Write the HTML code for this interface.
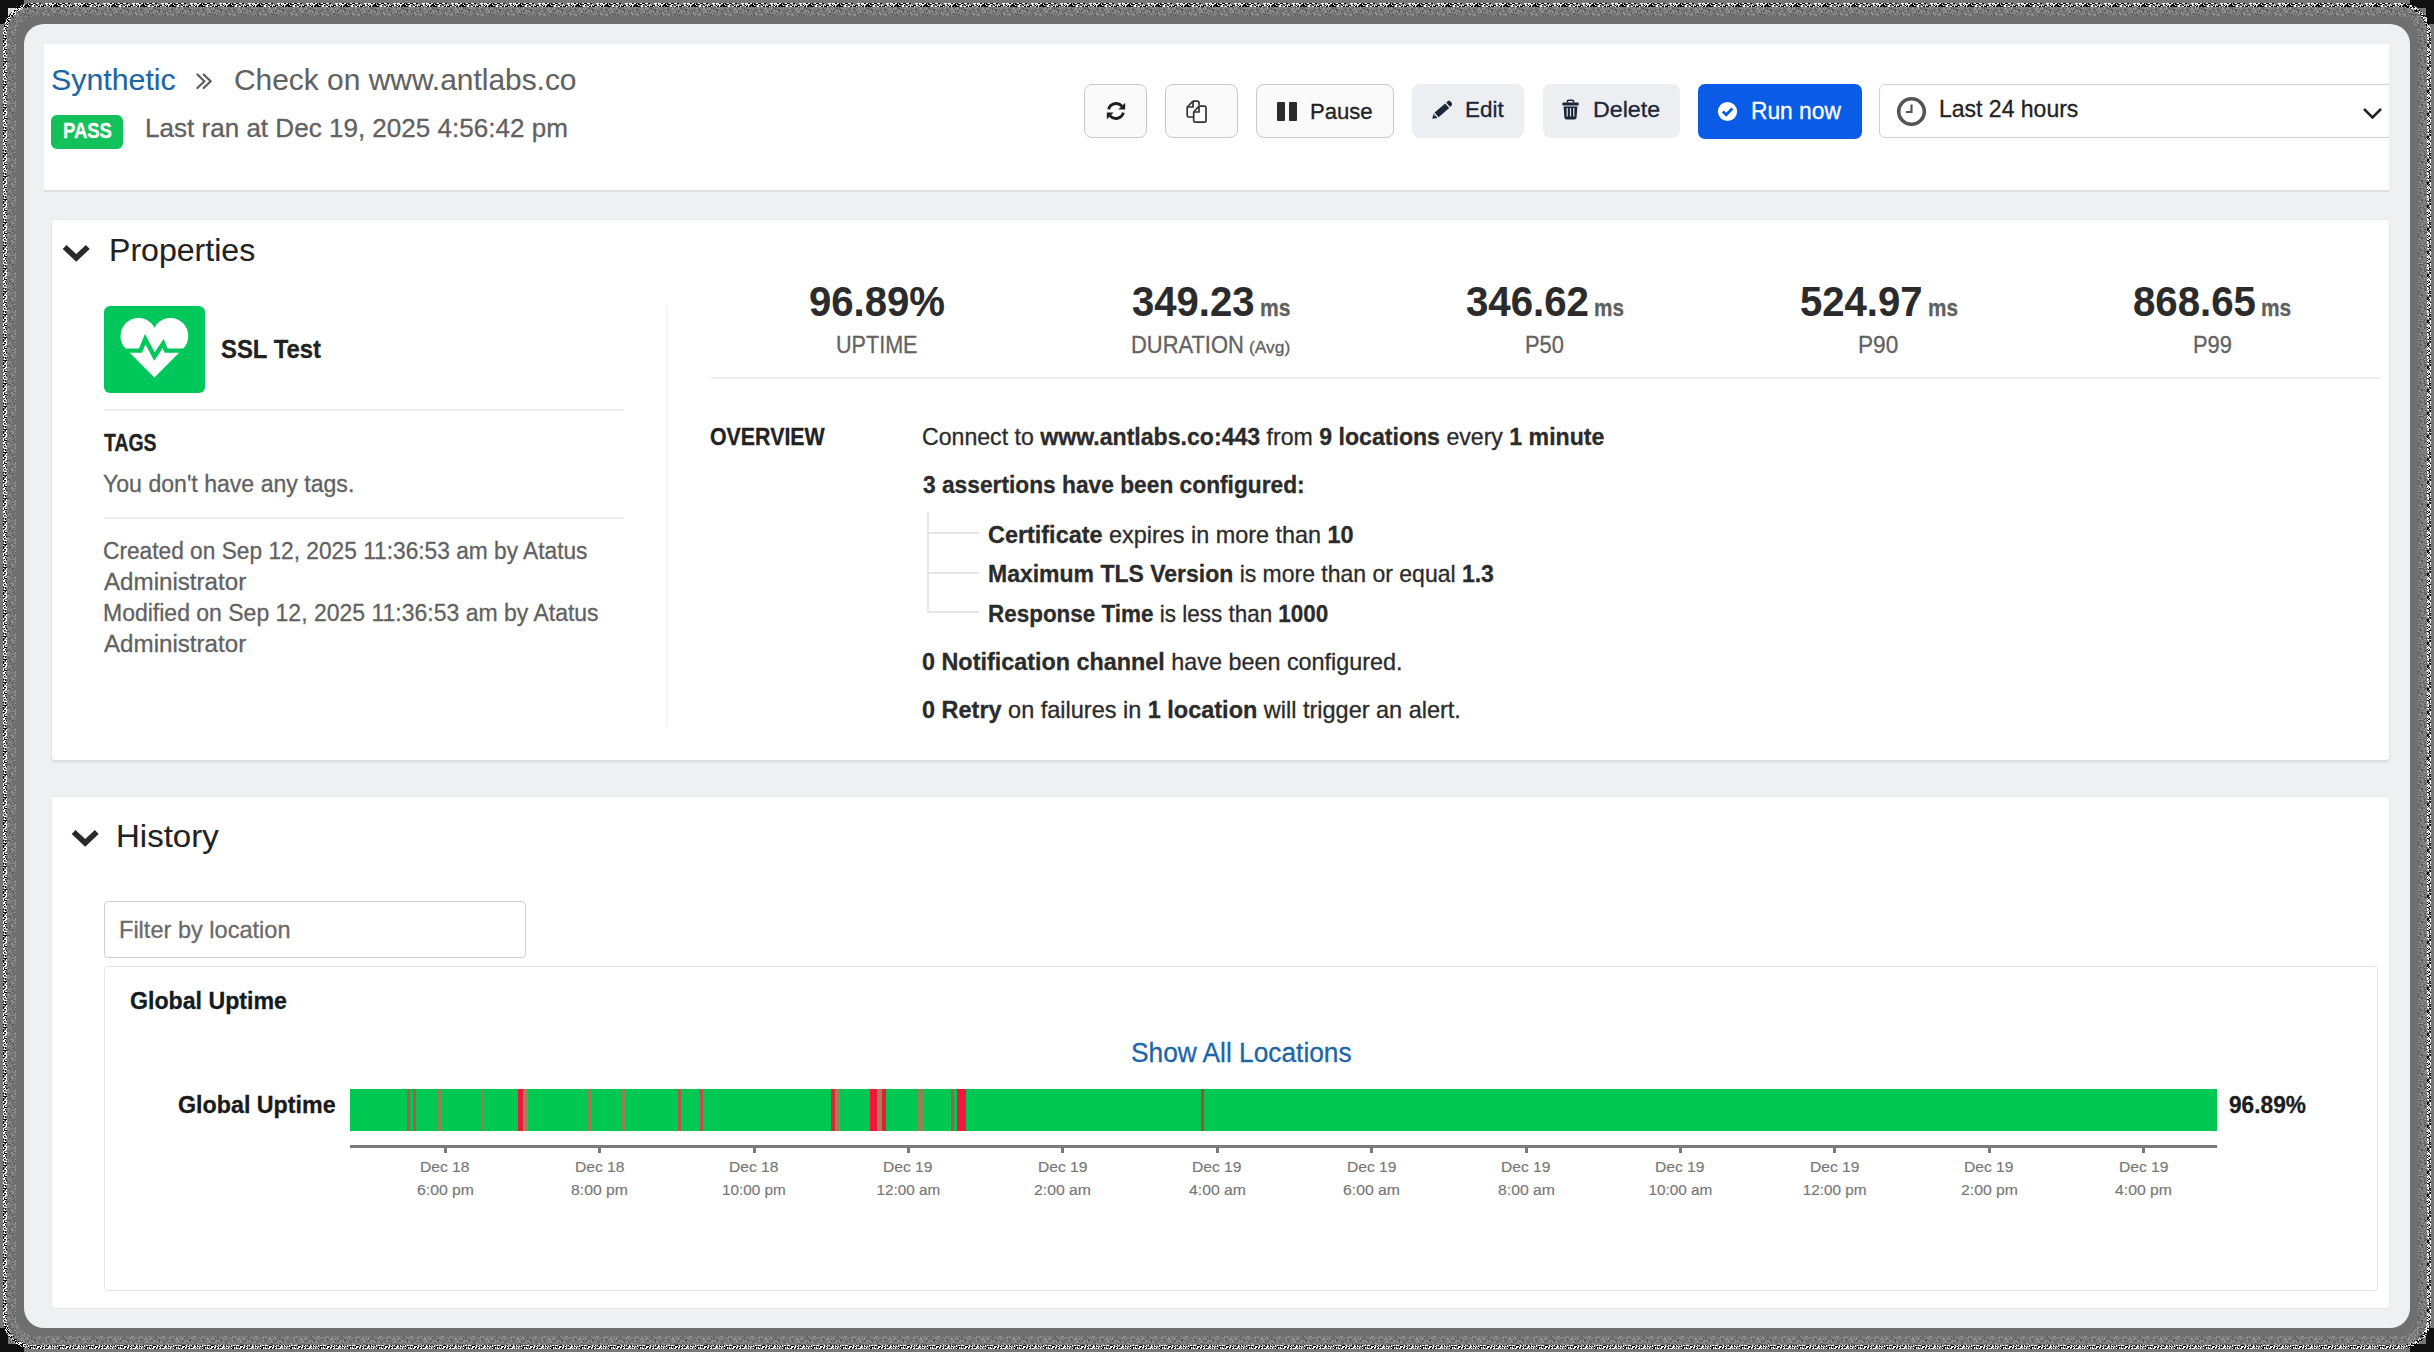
<!DOCTYPE html>
<html><head><meta charset="utf-8"><title>Check on www.antlabs.co</title>
<style>
html,body{margin:0;padding:0;}
body{width:2434px;height:1352px;position:relative;overflow:hidden;background:#6e6e6e;font-family:"Liberation Sans",sans-serif;}
.t{position:absolute;white-space:nowrap;transform-origin:0 0;-webkit-text-stroke:0.3px currentColor;}
.nt{-webkit-text-stroke:0.1px currentColor;}
.b{position:absolute;}
b{font-weight:bold;}
</style></head><body>
<svg class="b" style="left:0;top:0" width="2434" height="1352" viewBox="0 0 2434 1352"><defs><pattern id="spk" width="29" height="23" patternUnits="userSpaceOnUse"><rect x="0" y="0" width="1" height="1" fill="#fff"/><rect x="2" y="0" width="1" height="1" fill="#000"/><rect x="4" y="0" width="1" height="1" fill="#fff"/><rect x="5" y="0" width="1" height="1" fill="#fff"/><rect x="7" y="0" width="1" height="1" fill="#fff"/><rect x="9" y="0" width="1" height="1" fill="#fff"/><rect x="12" y="0" width="1" height="1" fill="#fff"/><rect x="13" y="0" width="1" height="1" fill="#000"/><rect x="16" y="0" width="1" height="1" fill="#000"/><rect x="17" y="0" width="1" height="1" fill="#000"/><rect x="18" y="0" width="1" height="1" fill="#fff"/><rect x="19" y="0" width="1" height="1" fill="#fff"/><rect x="20" y="0" width="1" height="1" fill="#000"/><rect x="22" y="0" width="1" height="1" fill="#000"/><rect x="23" y="0" width="1" height="1" fill="#fff"/><rect x="26" y="0" width="1" height="1" fill="#fff"/><rect x="27" y="0" width="1" height="1" fill="#000"/><rect x="0" y="1" width="1" height="1" fill="#fff"/><rect x="1" y="1" width="1" height="1" fill="#000"/><rect x="2" y="1" width="1" height="1" fill="#fff"/><rect x="3" y="1" width="1" height="1" fill="#fff"/><rect x="7" y="1" width="1" height="1" fill="#000"/><rect x="8" y="1" width="1" height="1" fill="#fff"/><rect x="9" y="1" width="1" height="1" fill="#fff"/><rect x="10" y="1" width="1" height="1" fill="#fff"/><rect x="11" y="1" width="1" height="1" fill="#fff"/><rect x="12" y="1" width="1" height="1" fill="#fff"/><rect x="13" y="1" width="1" height="1" fill="#000"/><rect x="14" y="1" width="1" height="1" fill="#000"/><rect x="16" y="1" width="1" height="1" fill="#fff"/><rect x="17" y="1" width="1" height="1" fill="#fff"/><rect x="18" y="1" width="1" height="1" fill="#000"/><rect x="19" y="1" width="1" height="1" fill="#000"/><rect x="20" y="1" width="1" height="1" fill="#fff"/><rect x="21" y="1" width="1" height="1" fill="#000"/><rect x="23" y="1" width="1" height="1" fill="#fff"/><rect x="24" y="1" width="1" height="1" fill="#000"/><rect x="26" y="1" width="1" height="1" fill="#fff"/><rect x="28" y="1" width="1" height="1" fill="#000"/><rect x="0" y="2" width="1" height="1" fill="#000"/><rect x="1" y="2" width="1" height="1" fill="#fff"/><rect x="2" y="2" width="1" height="1" fill="#000"/><rect x="3" y="2" width="1" height="1" fill="#fff"/><rect x="4" y="2" width="1" height="1" fill="#000"/><rect x="5" y="2" width="1" height="1" fill="#fff"/><rect x="6" y="2" width="1" height="1" fill="#fff"/><rect x="7" y="2" width="1" height="1" fill="#fff"/><rect x="8" y="2" width="1" height="1" fill="#000"/><rect x="9" y="2" width="1" height="1" fill="#000"/><rect x="10" y="2" width="1" height="1" fill="#fff"/><rect x="11" y="2" width="1" height="1" fill="#000"/><rect x="13" y="2" width="1" height="1" fill="#000"/><rect x="14" y="2" width="1" height="1" fill="#000"/><rect x="15" y="2" width="1" height="1" fill="#000"/><rect x="16" y="2" width="1" height="1" fill="#000"/><rect x="17" y="2" width="1" height="1" fill="#fff"/><rect x="18" y="2" width="1" height="1" fill="#fff"/><rect x="19" y="2" width="1" height="1" fill="#000"/><rect x="21" y="2" width="1" height="1" fill="#fff"/><rect x="25" y="2" width="1" height="1" fill="#000"/><rect x="28" y="2" width="1" height="1" fill="#fff"/><rect x="0" y="3" width="1" height="1" fill="#000"/><rect x="2" y="3" width="1" height="1" fill="#fff"/><rect x="3" y="3" width="1" height="1" fill="#fff"/><rect x="4" y="3" width="1" height="1" fill="#000"/><rect x="5" y="3" width="1" height="1" fill="#000"/><rect x="6" y="3" width="1" height="1" fill="#000"/><rect x="7" y="3" width="1" height="1" fill="#fff"/><rect x="8" y="3" width="1" height="1" fill="#fff"/><rect x="9" y="3" width="1" height="1" fill="#fff"/><rect x="10" y="3" width="1" height="1" fill="#000"/><rect x="11" y="3" width="1" height="1" fill="#000"/><rect x="16" y="3" width="1" height="1" fill="#fff"/><rect x="17" y="3" width="1" height="1" fill="#fff"/><rect x="18" y="3" width="1" height="1" fill="#fff"/><rect x="20" y="3" width="1" height="1" fill="#fff"/><rect x="21" y="3" width="1" height="1" fill="#fff"/><rect x="22" y="3" width="1" height="1" fill="#fff"/><rect x="23" y="3" width="1" height="1" fill="#000"/><rect x="24" y="3" width="1" height="1" fill="#000"/><rect x="25" y="3" width="1" height="1" fill="#fff"/><rect x="26" y="3" width="1" height="1" fill="#fff"/><rect x="27" y="3" width="1" height="1" fill="#000"/><rect x="0" y="4" width="1" height="1" fill="#000"/><rect x="1" y="4" width="1" height="1" fill="#000"/><rect x="2" y="4" width="1" height="1" fill="#000"/><rect x="3" y="4" width="1" height="1" fill="#000"/><rect x="4" y="4" width="1" height="1" fill="#fff"/><rect x="5" y="4" width="1" height="1" fill="#fff"/><rect x="7" y="4" width="1" height="1" fill="#000"/><rect x="12" y="4" width="1" height="1" fill="#fff"/><rect x="17" y="4" width="1" height="1" fill="#fff"/><rect x="19" y="4" width="1" height="1" fill="#000"/><rect x="20" y="4" width="1" height="1" fill="#fff"/><rect x="22" y="4" width="1" height="1" fill="#fff"/><rect x="23" y="4" width="1" height="1" fill="#fff"/><rect x="24" y="4" width="1" height="1" fill="#fff"/><rect x="26" y="4" width="1" height="1" fill="#000"/><rect x="27" y="4" width="1" height="1" fill="#000"/><rect x="28" y="4" width="1" height="1" fill="#fff"/><rect x="0" y="5" width="1" height="1" fill="#fff"/><rect x="3" y="5" width="1" height="1" fill="#fff"/><rect x="4" y="5" width="1" height="1" fill="#fff"/><rect x="5" y="5" width="1" height="1" fill="#000"/><rect x="8" y="5" width="1" height="1" fill="#000"/><rect x="9" y="5" width="1" height="1" fill="#fff"/><rect x="11" y="5" width="1" height="1" fill="#fff"/><rect x="13" y="5" width="1" height="1" fill="#fff"/><rect x="14" y="5" width="1" height="1" fill="#000"/><rect x="15" y="5" width="1" height="1" fill="#000"/><rect x="16" y="5" width="1" height="1" fill="#000"/><rect x="17" y="5" width="1" height="1" fill="#fff"/><rect x="18" y="5" width="1" height="1" fill="#fff"/><rect x="20" y="5" width="1" height="1" fill="#000"/><rect x="21" y="5" width="1" height="1" fill="#fff"/><rect x="22" y="5" width="1" height="1" fill="#000"/><rect x="23" y="5" width="1" height="1" fill="#fff"/><rect x="25" y="5" width="1" height="1" fill="#000"/><rect x="26" y="5" width="1" height="1" fill="#000"/><rect x="27" y="5" width="1" height="1" fill="#000"/><rect x="28" y="5" width="1" height="1" fill="#000"/><rect x="0" y="6" width="1" height="1" fill="#000"/><rect x="1" y="6" width="1" height="1" fill="#000"/><rect x="3" y="6" width="1" height="1" fill="#fff"/><rect x="4" y="6" width="1" height="1" fill="#fff"/><rect x="7" y="6" width="1" height="1" fill="#fff"/><rect x="8" y="6" width="1" height="1" fill="#fff"/><rect x="9" y="6" width="1" height="1" fill="#000"/><rect x="10" y="6" width="1" height="1" fill="#000"/><rect x="11" y="6" width="1" height="1" fill="#fff"/><rect x="12" y="6" width="1" height="1" fill="#000"/><rect x="13" y="6" width="1" height="1" fill="#000"/><rect x="14" y="6" width="1" height="1" fill="#000"/><rect x="15" y="6" width="1" height="1" fill="#fff"/><rect x="20" y="6" width="1" height="1" fill="#fff"/><rect x="21" y="6" width="1" height="1" fill="#000"/><rect x="22" y="6" width="1" height="1" fill="#000"/><rect x="23" y="6" width="1" height="1" fill="#fff"/><rect x="24" y="6" width="1" height="1" fill="#000"/><rect x="25" y="6" width="1" height="1" fill="#000"/><rect x="27" y="6" width="1" height="1" fill="#000"/><rect x="28" y="6" width="1" height="1" fill="#000"/><rect x="0" y="7" width="1" height="1" fill="#000"/><rect x="1" y="7" width="1" height="1" fill="#000"/><rect x="2" y="7" width="1" height="1" fill="#fff"/><rect x="4" y="7" width="1" height="1" fill="#000"/><rect x="5" y="7" width="1" height="1" fill="#fff"/><rect x="6" y="7" width="1" height="1" fill="#000"/><rect x="7" y="7" width="1" height="1" fill="#000"/><rect x="8" y="7" width="1" height="1" fill="#fff"/><rect x="9" y="7" width="1" height="1" fill="#fff"/><rect x="10" y="7" width="1" height="1" fill="#000"/><rect x="11" y="7" width="1" height="1" fill="#000"/><rect x="15" y="7" width="1" height="1" fill="#000"/><rect x="16" y="7" width="1" height="1" fill="#000"/><rect x="18" y="7" width="1" height="1" fill="#000"/><rect x="19" y="7" width="1" height="1" fill="#000"/><rect x="20" y="7" width="1" height="1" fill="#000"/><rect x="21" y="7" width="1" height="1" fill="#fff"/><rect x="22" y="7" width="1" height="1" fill="#fff"/><rect x="25" y="7" width="1" height="1" fill="#000"/><rect x="26" y="7" width="1" height="1" fill="#000"/><rect x="27" y="7" width="1" height="1" fill="#fff"/><rect x="28" y="7" width="1" height="1" fill="#000"/><rect x="0" y="8" width="1" height="1" fill="#fff"/><rect x="1" y="8" width="1" height="1" fill="#000"/><rect x="2" y="8" width="1" height="1" fill="#000"/><rect x="4" y="8" width="1" height="1" fill="#fff"/><rect x="5" y="8" width="1" height="1" fill="#fff"/><rect x="7" y="8" width="1" height="1" fill="#fff"/><rect x="8" y="8" width="1" height="1" fill="#fff"/><rect x="9" y="8" width="1" height="1" fill="#fff"/><rect x="11" y="8" width="1" height="1" fill="#000"/><rect x="12" y="8" width="1" height="1" fill="#fff"/><rect x="13" y="8" width="1" height="1" fill="#fff"/><rect x="14" y="8" width="1" height="1" fill="#fff"/><rect x="15" y="8" width="1" height="1" fill="#000"/><rect x="16" y="8" width="1" height="1" fill="#fff"/><rect x="17" y="8" width="1" height="1" fill="#000"/><rect x="18" y="8" width="1" height="1" fill="#fff"/><rect x="19" y="8" width="1" height="1" fill="#fff"/><rect x="20" y="8" width="1" height="1" fill="#fff"/><rect x="22" y="8" width="1" height="1" fill="#fff"/><rect x="25" y="8" width="1" height="1" fill="#000"/><rect x="27" y="8" width="1" height="1" fill="#fff"/><rect x="28" y="8" width="1" height="1" fill="#000"/><rect x="0" y="9" width="1" height="1" fill="#fff"/><rect x="1" y="9" width="1" height="1" fill="#fff"/><rect x="2" y="9" width="1" height="1" fill="#fff"/><rect x="3" y="9" width="1" height="1" fill="#fff"/><rect x="4" y="9" width="1" height="1" fill="#000"/><rect x="6" y="9" width="1" height="1" fill="#fff"/><rect x="8" y="9" width="1" height="1" fill="#fff"/><rect x="9" y="9" width="1" height="1" fill="#000"/><rect x="10" y="9" width="1" height="1" fill="#fff"/><rect x="11" y="9" width="1" height="1" fill="#fff"/><rect x="12" y="9" width="1" height="1" fill="#000"/><rect x="13" y="9" width="1" height="1" fill="#000"/><rect x="14" y="9" width="1" height="1" fill="#fff"/><rect x="15" y="9" width="1" height="1" fill="#fff"/><rect x="16" y="9" width="1" height="1" fill="#fff"/><rect x="17" y="9" width="1" height="1" fill="#fff"/><rect x="18" y="9" width="1" height="1" fill="#000"/><rect x="19" y="9" width="1" height="1" fill="#fff"/><rect x="20" y="9" width="1" height="1" fill="#fff"/><rect x="21" y="9" width="1" height="1" fill="#fff"/><rect x="22" y="9" width="1" height="1" fill="#000"/><rect x="23" y="9" width="1" height="1" fill="#000"/><rect x="24" y="9" width="1" height="1" fill="#000"/><rect x="25" y="9" width="1" height="1" fill="#000"/><rect x="26" y="9" width="1" height="1" fill="#fff"/><rect x="27" y="9" width="1" height="1" fill="#fff"/><rect x="28" y="9" width="1" height="1" fill="#000"/><rect x="0" y="10" width="1" height="1" fill="#000"/><rect x="3" y="10" width="1" height="1" fill="#fff"/><rect x="7" y="10" width="1" height="1" fill="#000"/><rect x="8" y="10" width="1" height="1" fill="#000"/><rect x="9" y="10" width="1" height="1" fill="#000"/><rect x="11" y="10" width="1" height="1" fill="#000"/><rect x="12" y="10" width="1" height="1" fill="#000"/><rect x="14" y="10" width="1" height="1" fill="#000"/><rect x="15" y="10" width="1" height="1" fill="#000"/><rect x="17" y="10" width="1" height="1" fill="#000"/><rect x="18" y="10" width="1" height="1" fill="#fff"/><rect x="19" y="10" width="1" height="1" fill="#fff"/><rect x="20" y="10" width="1" height="1" fill="#000"/><rect x="21" y="10" width="1" height="1" fill="#000"/><rect x="23" y="10" width="1" height="1" fill="#fff"/><rect x="24" y="10" width="1" height="1" fill="#fff"/><rect x="25" y="10" width="1" height="1" fill="#fff"/><rect x="27" y="10" width="1" height="1" fill="#fff"/><rect x="28" y="10" width="1" height="1" fill="#000"/><rect x="1" y="11" width="1" height="1" fill="#fff"/><rect x="2" y="11" width="1" height="1" fill="#fff"/><rect x="4" y="11" width="1" height="1" fill="#fff"/><rect x="5" y="11" width="1" height="1" fill="#fff"/><rect x="6" y="11" width="1" height="1" fill="#fff"/><rect x="8" y="11" width="1" height="1" fill="#000"/><rect x="9" y="11" width="1" height="1" fill="#000"/><rect x="10" y="11" width="1" height="1" fill="#000"/><rect x="12" y="11" width="1" height="1" fill="#fff"/><rect x="14" y="11" width="1" height="1" fill="#000"/><rect x="15" y="11" width="1" height="1" fill="#fff"/><rect x="17" y="11" width="1" height="1" fill="#fff"/><rect x="18" y="11" width="1" height="1" fill="#000"/><rect x="19" y="11" width="1" height="1" fill="#000"/><rect x="20" y="11" width="1" height="1" fill="#fff"/><rect x="22" y="11" width="1" height="1" fill="#000"/><rect x="23" y="11" width="1" height="1" fill="#fff"/><rect x="24" y="11" width="1" height="1" fill="#000"/><rect x="27" y="11" width="1" height="1" fill="#000"/><rect x="28" y="11" width="1" height="1" fill="#fff"/><rect x="1" y="12" width="1" height="1" fill="#000"/><rect x="2" y="12" width="1" height="1" fill="#000"/><rect x="3" y="12" width="1" height="1" fill="#000"/><rect x="5" y="12" width="1" height="1" fill="#000"/><rect x="7" y="12" width="1" height="1" fill="#000"/><rect x="8" y="12" width="1" height="1" fill="#fff"/><rect x="9" y="12" width="1" height="1" fill="#fff"/><rect x="10" y="12" width="1" height="1" fill="#fff"/><rect x="11" y="12" width="1" height="1" fill="#000"/><rect x="12" y="12" width="1" height="1" fill="#fff"/><rect x="14" y="12" width="1" height="1" fill="#fff"/><rect x="20" y="12" width="1" height="1" fill="#fff"/><rect x="21" y="12" width="1" height="1" fill="#fff"/><rect x="22" y="12" width="1" height="1" fill="#000"/><rect x="23" y="12" width="1" height="1" fill="#fff"/><rect x="24" y="12" width="1" height="1" fill="#fff"/><rect x="26" y="12" width="1" height="1" fill="#fff"/><rect x="28" y="12" width="1" height="1" fill="#fff"/><rect x="1" y="13" width="1" height="1" fill="#000"/><rect x="2" y="13" width="1" height="1" fill="#fff"/><rect x="4" y="13" width="1" height="1" fill="#fff"/><rect x="5" y="13" width="1" height="1" fill="#000"/><rect x="7" y="13" width="1" height="1" fill="#000"/><rect x="8" y="13" width="1" height="1" fill="#fff"/><rect x="9" y="13" width="1" height="1" fill="#fff"/><rect x="10" y="13" width="1" height="1" fill="#000"/><rect x="11" y="13" width="1" height="1" fill="#fff"/><rect x="12" y="13" width="1" height="1" fill="#fff"/><rect x="13" y="13" width="1" height="1" fill="#000"/><rect x="14" y="13" width="1" height="1" fill="#000"/><rect x="15" y="13" width="1" height="1" fill="#fff"/><rect x="16" y="13" width="1" height="1" fill="#000"/><rect x="17" y="13" width="1" height="1" fill="#000"/><rect x="18" y="13" width="1" height="1" fill="#000"/><rect x="19" y="13" width="1" height="1" fill="#fff"/><rect x="20" y="13" width="1" height="1" fill="#fff"/><rect x="24" y="13" width="1" height="1" fill="#000"/><rect x="25" y="13" width="1" height="1" fill="#fff"/><rect x="28" y="13" width="1" height="1" fill="#000"/><rect x="0" y="14" width="1" height="1" fill="#000"/><rect x="1" y="14" width="1" height="1" fill="#000"/><rect x="2" y="14" width="1" height="1" fill="#fff"/><rect x="4" y="14" width="1" height="1" fill="#fff"/><rect x="5" y="14" width="1" height="1" fill="#fff"/><rect x="7" y="14" width="1" height="1" fill="#fff"/><rect x="8" y="14" width="1" height="1" fill="#fff"/><rect x="9" y="14" width="1" height="1" fill="#000"/><rect x="10" y="14" width="1" height="1" fill="#000"/><rect x="11" y="14" width="1" height="1" fill="#fff"/><rect x="13" y="14" width="1" height="1" fill="#000"/><rect x="14" y="14" width="1" height="1" fill="#fff"/><rect x="15" y="14" width="1" height="1" fill="#fff"/><rect x="17" y="14" width="1" height="1" fill="#fff"/><rect x="18" y="14" width="1" height="1" fill="#fff"/><rect x="19" y="14" width="1" height="1" fill="#fff"/><rect x="21" y="14" width="1" height="1" fill="#fff"/><rect x="23" y="14" width="1" height="1" fill="#fff"/><rect x="25" y="14" width="1" height="1" fill="#fff"/><rect x="28" y="14" width="1" height="1" fill="#fff"/><rect x="1" y="15" width="1" height="1" fill="#fff"/><rect x="2" y="15" width="1" height="1" fill="#fff"/><rect x="3" y="15" width="1" height="1" fill="#000"/><rect x="4" y="15" width="1" height="1" fill="#000"/><rect x="5" y="15" width="1" height="1" fill="#000"/><rect x="6" y="15" width="1" height="1" fill="#000"/><rect x="7" y="15" width="1" height="1" fill="#fff"/><rect x="8" y="15" width="1" height="1" fill="#fff"/><rect x="9" y="15" width="1" height="1" fill="#000"/><rect x="11" y="15" width="1" height="1" fill="#000"/><rect x="12" y="15" width="1" height="1" fill="#000"/><rect x="14" y="15" width="1" height="1" fill="#000"/><rect x="15" y="15" width="1" height="1" fill="#000"/><rect x="16" y="15" width="1" height="1" fill="#000"/><rect x="17" y="15" width="1" height="1" fill="#000"/><rect x="18" y="15" width="1" height="1" fill="#000"/><rect x="20" y="15" width="1" height="1" fill="#fff"/><rect x="21" y="15" width="1" height="1" fill="#fff"/><rect x="22" y="15" width="1" height="1" fill="#000"/><rect x="23" y="15" width="1" height="1" fill="#000"/><rect x="24" y="15" width="1" height="1" fill="#000"/><rect x="25" y="15" width="1" height="1" fill="#fff"/><rect x="26" y="15" width="1" height="1" fill="#000"/><rect x="27" y="15" width="1" height="1" fill="#000"/><rect x="28" y="15" width="1" height="1" fill="#000"/><rect x="3" y="16" width="1" height="1" fill="#fff"/><rect x="5" y="16" width="1" height="1" fill="#000"/><rect x="6" y="16" width="1" height="1" fill="#fff"/><rect x="7" y="16" width="1" height="1" fill="#000"/><rect x="8" y="16" width="1" height="1" fill="#000"/><rect x="9" y="16" width="1" height="1" fill="#000"/><rect x="10" y="16" width="1" height="1" fill="#fff"/><rect x="12" y="16" width="1" height="1" fill="#000"/><rect x="13" y="16" width="1" height="1" fill="#000"/><rect x="14" y="16" width="1" height="1" fill="#fff"/><rect x="15" y="16" width="1" height="1" fill="#fff"/><rect x="16" y="16" width="1" height="1" fill="#000"/><rect x="18" y="16" width="1" height="1" fill="#000"/><rect x="19" y="16" width="1" height="1" fill="#fff"/><rect x="21" y="16" width="1" height="1" fill="#fff"/><rect x="22" y="16" width="1" height="1" fill="#000"/><rect x="24" y="16" width="1" height="1" fill="#000"/><rect x="25" y="16" width="1" height="1" fill="#000"/><rect x="26" y="16" width="1" height="1" fill="#fff"/><rect x="27" y="16" width="1" height="1" fill="#fff"/><rect x="28" y="16" width="1" height="1" fill="#fff"/><rect x="0" y="17" width="1" height="1" fill="#000"/><rect x="1" y="17" width="1" height="1" fill="#000"/><rect x="2" y="17" width="1" height="1" fill="#fff"/><rect x="3" y="17" width="1" height="1" fill="#000"/><rect x="6" y="17" width="1" height="1" fill="#fff"/><rect x="7" y="17" width="1" height="1" fill="#000"/><rect x="8" y="17" width="1" height="1" fill="#fff"/><rect x="9" y="17" width="1" height="1" fill="#fff"/><rect x="12" y="17" width="1" height="1" fill="#fff"/><rect x="13" y="17" width="1" height="1" fill="#000"/><rect x="14" y="17" width="1" height="1" fill="#000"/><rect x="15" y="17" width="1" height="1" fill="#000"/><rect x="16" y="17" width="1" height="1" fill="#fff"/><rect x="17" y="17" width="1" height="1" fill="#fff"/><rect x="18" y="17" width="1" height="1" fill="#fff"/><rect x="19" y="17" width="1" height="1" fill="#fff"/><rect x="21" y="17" width="1" height="1" fill="#000"/><rect x="23" y="17" width="1" height="1" fill="#000"/><rect x="24" y="17" width="1" height="1" fill="#000"/><rect x="26" y="17" width="1" height="1" fill="#fff"/><rect x="27" y="17" width="1" height="1" fill="#000"/><rect x="28" y="17" width="1" height="1" fill="#000"/><rect x="0" y="18" width="1" height="1" fill="#fff"/><rect x="1" y="18" width="1" height="1" fill="#fff"/><rect x="3" y="18" width="1" height="1" fill="#000"/><rect x="5" y="18" width="1" height="1" fill="#fff"/><rect x="7" y="18" width="1" height="1" fill="#fff"/><rect x="8" y="18" width="1" height="1" fill="#000"/><rect x="10" y="18" width="1" height="1" fill="#000"/><rect x="11" y="18" width="1" height="1" fill="#fff"/><rect x="12" y="18" width="1" height="1" fill="#000"/><rect x="13" y="18" width="1" height="1" fill="#000"/><rect x="15" y="18" width="1" height="1" fill="#000"/><rect x="16" y="18" width="1" height="1" fill="#fff"/><rect x="19" y="18" width="1" height="1" fill="#fff"/><rect x="20" y="18" width="1" height="1" fill="#fff"/><rect x="21" y="18" width="1" height="1" fill="#fff"/><rect x="23" y="18" width="1" height="1" fill="#fff"/><rect x="24" y="18" width="1" height="1" fill="#fff"/><rect x="25" y="18" width="1" height="1" fill="#000"/><rect x="27" y="18" width="1" height="1" fill="#000"/><rect x="28" y="18" width="1" height="1" fill="#000"/><rect x="1" y="19" width="1" height="1" fill="#000"/><rect x="2" y="19" width="1" height="1" fill="#000"/><rect x="3" y="19" width="1" height="1" fill="#000"/><rect x="4" y="19" width="1" height="1" fill="#fff"/><rect x="5" y="19" width="1" height="1" fill="#fff"/><rect x="6" y="19" width="1" height="1" fill="#fff"/><rect x="7" y="19" width="1" height="1" fill="#000"/><rect x="8" y="19" width="1" height="1" fill="#fff"/><rect x="9" y="19" width="1" height="1" fill="#fff"/><rect x="10" y="19" width="1" height="1" fill="#fff"/><rect x="11" y="19" width="1" height="1" fill="#fff"/><rect x="14" y="19" width="1" height="1" fill="#000"/><rect x="15" y="19" width="1" height="1" fill="#fff"/><rect x="16" y="19" width="1" height="1" fill="#000"/><rect x="18" y="19" width="1" height="1" fill="#fff"/><rect x="19" y="19" width="1" height="1" fill="#fff"/><rect x="21" y="19" width="1" height="1" fill="#fff"/><rect x="22" y="19" width="1" height="1" fill="#000"/><rect x="23" y="19" width="1" height="1" fill="#000"/><rect x="24" y="19" width="1" height="1" fill="#000"/><rect x="25" y="19" width="1" height="1" fill="#000"/><rect x="26" y="19" width="1" height="1" fill="#000"/><rect x="27" y="19" width="1" height="1" fill="#000"/><rect x="28" y="19" width="1" height="1" fill="#fff"/><rect x="0" y="20" width="1" height="1" fill="#000"/><rect x="2" y="20" width="1" height="1" fill="#000"/><rect x="3" y="20" width="1" height="1" fill="#fff"/><rect x="4" y="20" width="1" height="1" fill="#000"/><rect x="5" y="20" width="1" height="1" fill="#000"/><rect x="6" y="20" width="1" height="1" fill="#fff"/><rect x="8" y="20" width="1" height="1" fill="#000"/><rect x="10" y="20" width="1" height="1" fill="#fff"/><rect x="11" y="20" width="1" height="1" fill="#fff"/><rect x="12" y="20" width="1" height="1" fill="#fff"/><rect x="13" y="20" width="1" height="1" fill="#000"/><rect x="14" y="20" width="1" height="1" fill="#000"/><rect x="15" y="20" width="1" height="1" fill="#fff"/><rect x="16" y="20" width="1" height="1" fill="#000"/><rect x="17" y="20" width="1" height="1" fill="#fff"/><rect x="18" y="20" width="1" height="1" fill="#fff"/><rect x="19" y="20" width="1" height="1" fill="#fff"/><rect x="23" y="20" width="1" height="1" fill="#000"/><rect x="24" y="20" width="1" height="1" fill="#fff"/><rect x="26" y="20" width="1" height="1" fill="#000"/><rect x="27" y="20" width="1" height="1" fill="#000"/><rect x="28" y="20" width="1" height="1" fill="#fff"/><rect x="3" y="21" width="1" height="1" fill="#fff"/><rect x="6" y="21" width="1" height="1" fill="#fff"/><rect x="7" y="21" width="1" height="1" fill="#fff"/><rect x="8" y="21" width="1" height="1" fill="#000"/><rect x="9" y="21" width="1" height="1" fill="#000"/><rect x="10" y="21" width="1" height="1" fill="#fff"/><rect x="11" y="21" width="1" height="1" fill="#fff"/><rect x="12" y="21" width="1" height="1" fill="#fff"/><rect x="13" y="21" width="1" height="1" fill="#fff"/><rect x="14" y="21" width="1" height="1" fill="#fff"/><rect x="16" y="21" width="1" height="1" fill="#fff"/><rect x="17" y="21" width="1" height="1" fill="#000"/><rect x="19" y="21" width="1" height="1" fill="#fff"/><rect x="20" y="21" width="1" height="1" fill="#000"/><rect x="21" y="21" width="1" height="1" fill="#000"/><rect x="23" y="21" width="1" height="1" fill="#fff"/><rect x="25" y="21" width="1" height="1" fill="#fff"/><rect x="26" y="21" width="1" height="1" fill="#fff"/><rect x="27" y="21" width="1" height="1" fill="#000"/><rect x="28" y="21" width="1" height="1" fill="#000"/><rect x="0" y="22" width="1" height="1" fill="#000"/><rect x="3" y="22" width="1" height="1" fill="#000"/><rect x="4" y="22" width="1" height="1" fill="#000"/><rect x="5" y="22" width="1" height="1" fill="#fff"/><rect x="6" y="22" width="1" height="1" fill="#fff"/><rect x="8" y="22" width="1" height="1" fill="#fff"/><rect x="9" y="22" width="1" height="1" fill="#000"/><rect x="10" y="22" width="1" height="1" fill="#000"/><rect x="11" y="22" width="1" height="1" fill="#000"/><rect x="12" y="22" width="1" height="1" fill="#000"/><rect x="16" y="22" width="1" height="1" fill="#fff"/><rect x="17" y="22" width="1" height="1" fill="#000"/><rect x="18" y="22" width="1" height="1" fill="#000"/><rect x="19" y="22" width="1" height="1" fill="#000"/><rect x="20" y="22" width="1" height="1" fill="#000"/><rect x="21" y="22" width="1" height="1" fill="#000"/><rect x="22" y="22" width="1" height="1" fill="#fff"/><rect x="23" y="22" width="1" height="1" fill="#fff"/><rect x="25" y="22" width="1" height="1" fill="#000"/><rect x="27" y="22" width="1" height="1" fill="#000"/><rect x="28" y="22" width="1" height="1" fill="#000"/></pattern><pattern id="nz" width="31" height="19" patternUnits="userSpaceOnUse"><rect x="3" y="0" width="1" height="1" fill="#8a8a8a"/><rect x="4" y="0" width="1" height="1" fill="#8a8a8a"/><rect x="7" y="0" width="1" height="1" fill="#8a8a8a"/><rect x="8" y="0" width="1" height="1" fill="#8a8a8a"/><rect x="11" y="0" width="1" height="1" fill="#8a8a8a"/><rect x="15" y="0" width="1" height="1" fill="#9a9a9a"/><rect x="16" y="0" width="1" height="1" fill="#8a8a8a"/><rect x="17" y="0" width="1" height="1" fill="#5a5a5a"/><rect x="21" y="0" width="1" height="1" fill="#9a9a9a"/><rect x="22" y="0" width="1" height="1" fill="#5a5a5a"/><rect x="26" y="0" width="1" height="1" fill="#8a8a8a"/><rect x="29" y="0" width="1" height="1" fill="#8a8a8a"/><rect x="30" y="0" width="1" height="1" fill="#9a9a9a"/><rect x="4" y="1" width="1" height="1" fill="#8a8a8a"/><rect x="6" y="1" width="1" height="1" fill="#5a5a5a"/><rect x="7" y="1" width="1" height="1" fill="#5a5a5a"/><rect x="8" y="1" width="1" height="1" fill="#8a8a8a"/><rect x="10" y="1" width="1" height="1" fill="#9a9a9a"/><rect x="12" y="1" width="1" height="1" fill="#5a5a5a"/><rect x="15" y="1" width="1" height="1" fill="#5a5a5a"/><rect x="17" y="1" width="1" height="1" fill="#9a9a9a"/><rect x="22" y="1" width="1" height="1" fill="#8a8a8a"/><rect x="23" y="1" width="1" height="1" fill="#9a9a9a"/><rect x="27" y="1" width="1" height="1" fill="#9a9a9a"/><rect x="1" y="2" width="1" height="1" fill="#5a5a5a"/><rect x="2" y="2" width="1" height="1" fill="#5a5a5a"/><rect x="3" y="2" width="1" height="1" fill="#5a5a5a"/><rect x="4" y="2" width="1" height="1" fill="#9a9a9a"/><rect x="5" y="2" width="1" height="1" fill="#9a9a9a"/><rect x="8" y="2" width="1" height="1" fill="#9a9a9a"/><rect x="9" y="2" width="1" height="1" fill="#5a5a5a"/><rect x="11" y="2" width="1" height="1" fill="#8a8a8a"/><rect x="19" y="2" width="1" height="1" fill="#9a9a9a"/><rect x="21" y="2" width="1" height="1" fill="#9a9a9a"/><rect x="24" y="2" width="1" height="1" fill="#5a5a5a"/><rect x="25" y="2" width="1" height="1" fill="#5a5a5a"/><rect x="30" y="2" width="1" height="1" fill="#9a9a9a"/><rect x="2" y="3" width="1" height="1" fill="#5a5a5a"/><rect x="5" y="3" width="1" height="1" fill="#5a5a5a"/><rect x="6" y="3" width="1" height="1" fill="#5a5a5a"/><rect x="10" y="3" width="1" height="1" fill="#9a9a9a"/><rect x="12" y="3" width="1" height="1" fill="#5a5a5a"/><rect x="13" y="3" width="1" height="1" fill="#5a5a5a"/><rect x="16" y="3" width="1" height="1" fill="#9a9a9a"/><rect x="17" y="3" width="1" height="1" fill="#8a8a8a"/><rect x="19" y="3" width="1" height="1" fill="#5a5a5a"/><rect x="23" y="3" width="1" height="1" fill="#5a5a5a"/><rect x="24" y="3" width="1" height="1" fill="#9a9a9a"/><rect x="25" y="3" width="1" height="1" fill="#8a8a8a"/><rect x="26" y="3" width="1" height="1" fill="#9a9a9a"/><rect x="30" y="3" width="1" height="1" fill="#9a9a9a"/><rect x="0" y="4" width="1" height="1" fill="#9a9a9a"/><rect x="5" y="4" width="1" height="1" fill="#9a9a9a"/><rect x="7" y="4" width="1" height="1" fill="#5a5a5a"/><rect x="8" y="4" width="1" height="1" fill="#5a5a5a"/><rect x="9" y="4" width="1" height="1" fill="#5a5a5a"/><rect x="10" y="4" width="1" height="1" fill="#5a5a5a"/><rect x="11" y="4" width="1" height="1" fill="#8a8a8a"/><rect x="15" y="4" width="1" height="1" fill="#5a5a5a"/><rect x="18" y="4" width="1" height="1" fill="#5a5a5a"/><rect x="22" y="4" width="1" height="1" fill="#8a8a8a"/><rect x="24" y="4" width="1" height="1" fill="#9a9a9a"/><rect x="25" y="4" width="1" height="1" fill="#5a5a5a"/><rect x="26" y="4" width="1" height="1" fill="#9a9a9a"/><rect x="0" y="5" width="1" height="1" fill="#5a5a5a"/><rect x="4" y="5" width="1" height="1" fill="#8a8a8a"/><rect x="5" y="5" width="1" height="1" fill="#8a8a8a"/><rect x="6" y="5" width="1" height="1" fill="#5a5a5a"/><rect x="7" y="5" width="1" height="1" fill="#5a5a5a"/><rect x="8" y="5" width="1" height="1" fill="#8a8a8a"/><rect x="10" y="5" width="1" height="1" fill="#5a5a5a"/><rect x="12" y="5" width="1" height="1" fill="#8a8a8a"/><rect x="14" y="5" width="1" height="1" fill="#5a5a5a"/><rect x="19" y="5" width="1" height="1" fill="#5a5a5a"/><rect x="20" y="5" width="1" height="1" fill="#8a8a8a"/><rect x="23" y="5" width="1" height="1" fill="#9a9a9a"/><rect x="24" y="5" width="1" height="1" fill="#8a8a8a"/><rect x="26" y="5" width="1" height="1" fill="#5a5a5a"/><rect x="27" y="5" width="1" height="1" fill="#8a8a8a"/><rect x="28" y="5" width="1" height="1" fill="#9a9a9a"/><rect x="0" y="6" width="1" height="1" fill="#5a5a5a"/><rect x="1" y="6" width="1" height="1" fill="#5a5a5a"/><rect x="2" y="6" width="1" height="1" fill="#9a9a9a"/><rect x="7" y="6" width="1" height="1" fill="#9a9a9a"/><rect x="8" y="6" width="1" height="1" fill="#8a8a8a"/><rect x="9" y="6" width="1" height="1" fill="#9a9a9a"/><rect x="11" y="6" width="1" height="1" fill="#5a5a5a"/><rect x="14" y="6" width="1" height="1" fill="#5a5a5a"/><rect x="15" y="6" width="1" height="1" fill="#9a9a9a"/><rect x="17" y="6" width="1" height="1" fill="#8a8a8a"/><rect x="18" y="6" width="1" height="1" fill="#8a8a8a"/><rect x="24" y="6" width="1" height="1" fill="#8a8a8a"/><rect x="25" y="6" width="1" height="1" fill="#8a8a8a"/><rect x="29" y="6" width="1" height="1" fill="#8a8a8a"/><rect x="2" y="7" width="1" height="1" fill="#5a5a5a"/><rect x="3" y="7" width="1" height="1" fill="#8a8a8a"/><rect x="7" y="7" width="1" height="1" fill="#8a8a8a"/><rect x="8" y="7" width="1" height="1" fill="#8a8a8a"/><rect x="11" y="7" width="1" height="1" fill="#8a8a8a"/><rect x="15" y="7" width="1" height="1" fill="#9a9a9a"/><rect x="17" y="7" width="1" height="1" fill="#8a8a8a"/><rect x="20" y="7" width="1" height="1" fill="#5a5a5a"/><rect x="21" y="7" width="1" height="1" fill="#9a9a9a"/><rect x="24" y="7" width="1" height="1" fill="#5a5a5a"/><rect x="27" y="7" width="1" height="1" fill="#9a9a9a"/><rect x="29" y="7" width="1" height="1" fill="#5a5a5a"/><rect x="0" y="8" width="1" height="1" fill="#5a5a5a"/><rect x="4" y="8" width="1" height="1" fill="#8a8a8a"/><rect x="5" y="8" width="1" height="1" fill="#8a8a8a"/><rect x="6" y="8" width="1" height="1" fill="#9a9a9a"/><rect x="8" y="8" width="1" height="1" fill="#8a8a8a"/><rect x="10" y="8" width="1" height="1" fill="#8a8a8a"/><rect x="13" y="8" width="1" height="1" fill="#8a8a8a"/><rect x="14" y="8" width="1" height="1" fill="#9a9a9a"/><rect x="17" y="8" width="1" height="1" fill="#5a5a5a"/><rect x="18" y="8" width="1" height="1" fill="#9a9a9a"/><rect x="21" y="8" width="1" height="1" fill="#9a9a9a"/><rect x="22" y="8" width="1" height="1" fill="#9a9a9a"/><rect x="25" y="8" width="1" height="1" fill="#9a9a9a"/><rect x="27" y="8" width="1" height="1" fill="#9a9a9a"/><rect x="28" y="8" width="1" height="1" fill="#8a8a8a"/><rect x="29" y="8" width="1" height="1" fill="#5a5a5a"/><rect x="0" y="9" width="1" height="1" fill="#5a5a5a"/><rect x="3" y="9" width="1" height="1" fill="#5a5a5a"/><rect x="4" y="9" width="1" height="1" fill="#5a5a5a"/><rect x="8" y="9" width="1" height="1" fill="#8a8a8a"/><rect x="12" y="9" width="1" height="1" fill="#5a5a5a"/><rect x="13" y="9" width="1" height="1" fill="#5a5a5a"/><rect x="15" y="9" width="1" height="1" fill="#8a8a8a"/><rect x="16" y="9" width="1" height="1" fill="#5a5a5a"/><rect x="18" y="9" width="1" height="1" fill="#5a5a5a"/><rect x="20" y="9" width="1" height="1" fill="#8a8a8a"/><rect x="21" y="9" width="1" height="1" fill="#8a8a8a"/><rect x="22" y="9" width="1" height="1" fill="#8a8a8a"/><rect x="25" y="9" width="1" height="1" fill="#8a8a8a"/><rect x="27" y="9" width="1" height="1" fill="#8a8a8a"/><rect x="0" y="10" width="1" height="1" fill="#8a8a8a"/><rect x="3" y="10" width="1" height="1" fill="#5a5a5a"/><rect x="4" y="10" width="1" height="1" fill="#5a5a5a"/><rect x="13" y="10" width="1" height="1" fill="#8a8a8a"/><rect x="15" y="10" width="1" height="1" fill="#8a8a8a"/><rect x="17" y="10" width="1" height="1" fill="#5a5a5a"/><rect x="18" y="10" width="1" height="1" fill="#5a5a5a"/><rect x="19" y="10" width="1" height="1" fill="#8a8a8a"/><rect x="21" y="10" width="1" height="1" fill="#8a8a8a"/><rect x="23" y="10" width="1" height="1" fill="#9a9a9a"/><rect x="25" y="10" width="1" height="1" fill="#5a5a5a"/><rect x="26" y="10" width="1" height="1" fill="#9a9a9a"/><rect x="27" y="10" width="1" height="1" fill="#5a5a5a"/><rect x="28" y="10" width="1" height="1" fill="#5a5a5a"/><rect x="30" y="10" width="1" height="1" fill="#9a9a9a"/><rect x="1" y="11" width="1" height="1" fill="#9a9a9a"/><rect x="2" y="11" width="1" height="1" fill="#9a9a9a"/><rect x="4" y="11" width="1" height="1" fill="#5a5a5a"/><rect x="5" y="11" width="1" height="1" fill="#9a9a9a"/><rect x="8" y="11" width="1" height="1" fill="#5a5a5a"/><rect x="10" y="11" width="1" height="1" fill="#5a5a5a"/><rect x="12" y="11" width="1" height="1" fill="#5a5a5a"/><rect x="14" y="11" width="1" height="1" fill="#8a8a8a"/><rect x="15" y="11" width="1" height="1" fill="#9a9a9a"/><rect x="18" y="11" width="1" height="1" fill="#8a8a8a"/><rect x="23" y="11" width="1" height="1" fill="#9a9a9a"/><rect x="24" y="11" width="1" height="1" fill="#8a8a8a"/><rect x="25" y="11" width="1" height="1" fill="#5a5a5a"/><rect x="27" y="11" width="1" height="1" fill="#5a5a5a"/><rect x="29" y="11" width="1" height="1" fill="#8a8a8a"/><rect x="30" y="11" width="1" height="1" fill="#8a8a8a"/><rect x="1" y="12" width="1" height="1" fill="#5a5a5a"/><rect x="2" y="12" width="1" height="1" fill="#8a8a8a"/><rect x="3" y="12" width="1" height="1" fill="#8a8a8a"/><rect x="4" y="12" width="1" height="1" fill="#5a5a5a"/><rect x="6" y="12" width="1" height="1" fill="#9a9a9a"/><rect x="7" y="12" width="1" height="1" fill="#8a8a8a"/><rect x="9" y="12" width="1" height="1" fill="#5a5a5a"/><rect x="11" y="12" width="1" height="1" fill="#9a9a9a"/><rect x="12" y="12" width="1" height="1" fill="#8a8a8a"/><rect x="14" y="12" width="1" height="1" fill="#5a5a5a"/><rect x="17" y="12" width="1" height="1" fill="#5a5a5a"/><rect x="19" y="12" width="1" height="1" fill="#5a5a5a"/><rect x="21" y="12" width="1" height="1" fill="#8a8a8a"/><rect x="22" y="12" width="1" height="1" fill="#9a9a9a"/><rect x="23" y="12" width="1" height="1" fill="#8a8a8a"/><rect x="24" y="12" width="1" height="1" fill="#8a8a8a"/><rect x="29" y="12" width="1" height="1" fill="#8a8a8a"/><rect x="0" y="13" width="1" height="1" fill="#8a8a8a"/><rect x="1" y="13" width="1" height="1" fill="#5a5a5a"/><rect x="4" y="13" width="1" height="1" fill="#8a8a8a"/><rect x="11" y="13" width="1" height="1" fill="#8a8a8a"/><rect x="12" y="13" width="1" height="1" fill="#8a8a8a"/><rect x="14" y="13" width="1" height="1" fill="#8a8a8a"/><rect x="17" y="13" width="1" height="1" fill="#9a9a9a"/><rect x="21" y="13" width="1" height="1" fill="#8a8a8a"/><rect x="22" y="13" width="1" height="1" fill="#5a5a5a"/><rect x="23" y="13" width="1" height="1" fill="#5a5a5a"/><rect x="27" y="13" width="1" height="1" fill="#8a8a8a"/><rect x="28" y="13" width="1" height="1" fill="#8a8a8a"/><rect x="30" y="13" width="1" height="1" fill="#8a8a8a"/><rect x="1" y="14" width="1" height="1" fill="#9a9a9a"/><rect x="2" y="14" width="1" height="1" fill="#5a5a5a"/><rect x="4" y="14" width="1" height="1" fill="#9a9a9a"/><rect x="6" y="14" width="1" height="1" fill="#8a8a8a"/><rect x="10" y="14" width="1" height="1" fill="#5a5a5a"/><rect x="12" y="14" width="1" height="1" fill="#8a8a8a"/><rect x="13" y="14" width="1" height="1" fill="#9a9a9a"/><rect x="16" y="14" width="1" height="1" fill="#8a8a8a"/><rect x="17" y="14" width="1" height="1" fill="#8a8a8a"/><rect x="18" y="14" width="1" height="1" fill="#8a8a8a"/><rect x="19" y="14" width="1" height="1" fill="#5a5a5a"/><rect x="24" y="14" width="1" height="1" fill="#5a5a5a"/><rect x="25" y="14" width="1" height="1" fill="#5a5a5a"/><rect x="26" y="14" width="1" height="1" fill="#5a5a5a"/><rect x="28" y="14" width="1" height="1" fill="#5a5a5a"/><rect x="29" y="14" width="1" height="1" fill="#5a5a5a"/><rect x="0" y="15" width="1" height="1" fill="#5a5a5a"/><rect x="7" y="15" width="1" height="1" fill="#5a5a5a"/><rect x="8" y="15" width="1" height="1" fill="#8a8a8a"/><rect x="9" y="15" width="1" height="1" fill="#5a5a5a"/><rect x="10" y="15" width="1" height="1" fill="#5a5a5a"/><rect x="12" y="15" width="1" height="1" fill="#8a8a8a"/><rect x="14" y="15" width="1" height="1" fill="#5a5a5a"/><rect x="15" y="15" width="1" height="1" fill="#8a8a8a"/><rect x="17" y="15" width="1" height="1" fill="#8a8a8a"/><rect x="18" y="15" width="1" height="1" fill="#9a9a9a"/><rect x="20" y="15" width="1" height="1" fill="#5a5a5a"/><rect x="24" y="15" width="1" height="1" fill="#5a5a5a"/><rect x="25" y="15" width="1" height="1" fill="#9a9a9a"/><rect x="26" y="15" width="1" height="1" fill="#5a5a5a"/><rect x="28" y="15" width="1" height="1" fill="#5a5a5a"/><rect x="0" y="16" width="1" height="1" fill="#9a9a9a"/><rect x="1" y="16" width="1" height="1" fill="#8a8a8a"/><rect x="2" y="16" width="1" height="1" fill="#8a8a8a"/><rect x="3" y="16" width="1" height="1" fill="#8a8a8a"/><rect x="4" y="16" width="1" height="1" fill="#9a9a9a"/><rect x="6" y="16" width="1" height="1" fill="#5a5a5a"/><rect x="7" y="16" width="1" height="1" fill="#8a8a8a"/><rect x="8" y="16" width="1" height="1" fill="#5a5a5a"/><rect x="10" y="16" width="1" height="1" fill="#5a5a5a"/><rect x="11" y="16" width="1" height="1" fill="#8a8a8a"/><rect x="14" y="16" width="1" height="1" fill="#8a8a8a"/><rect x="16" y="16" width="1" height="1" fill="#9a9a9a"/><rect x="20" y="16" width="1" height="1" fill="#9a9a9a"/><rect x="25" y="16" width="1" height="1" fill="#8a8a8a"/><rect x="26" y="16" width="1" height="1" fill="#8a8a8a"/><rect x="27" y="16" width="1" height="1" fill="#8a8a8a"/><rect x="28" y="16" width="1" height="1" fill="#5a5a5a"/><rect x="30" y="16" width="1" height="1" fill="#8a8a8a"/><rect x="1" y="17" width="1" height="1" fill="#5a5a5a"/><rect x="2" y="17" width="1" height="1" fill="#5a5a5a"/><rect x="3" y="17" width="1" height="1" fill="#5a5a5a"/><rect x="5" y="17" width="1" height="1" fill="#5a5a5a"/><rect x="6" y="17" width="1" height="1" fill="#9a9a9a"/><rect x="7" y="17" width="1" height="1" fill="#9a9a9a"/><rect x="12" y="17" width="1" height="1" fill="#5a5a5a"/><rect x="13" y="17" width="1" height="1" fill="#5a5a5a"/><rect x="14" y="17" width="1" height="1" fill="#8a8a8a"/><rect x="15" y="17" width="1" height="1" fill="#5a5a5a"/><rect x="16" y="17" width="1" height="1" fill="#8a8a8a"/><rect x="20" y="17" width="1" height="1" fill="#5a5a5a"/><rect x="27" y="17" width="1" height="1" fill="#5a5a5a"/><rect x="30" y="17" width="1" height="1" fill="#9a9a9a"/><rect x="0" y="18" width="1" height="1" fill="#8a8a8a"/><rect x="1" y="18" width="1" height="1" fill="#5a5a5a"/><rect x="2" y="18" width="1" height="1" fill="#8a8a8a"/><rect x="6" y="18" width="1" height="1" fill="#5a5a5a"/><rect x="8" y="18" width="1" height="1" fill="#5a5a5a"/><rect x="9" y="18" width="1" height="1" fill="#8a8a8a"/><rect x="11" y="18" width="1" height="1" fill="#5a5a5a"/><rect x="13" y="18" width="1" height="1" fill="#5a5a5a"/><rect x="17" y="18" width="1" height="1" fill="#5a5a5a"/><rect x="18" y="18" width="1" height="1" fill="#9a9a9a"/><rect x="22" y="18" width="1" height="1" fill="#5a5a5a"/><rect x="26" y="18" width="1" height="1" fill="#5a5a5a"/><rect x="28" y="18" width="1" height="1" fill="#9a9a9a"/></pattern></defs>
<rect x="0" y="0" width="2434" height="1352" fill="#777"/>
<rect x="0" y="0" width="24" height="8" fill="#111"/><rect x="0" y="0" width="8" height="24" fill="#111"/><rect x="8" y="8" width="8" height="8" fill="#ddd"/>
<rect x="2410" y="0" width="24" height="8" fill="#111"/><rect x="2426" y="0" width="8" height="24" fill="#111"/>
<rect x="0" y="1344" width="24" height="8" fill="#111"/><rect x="0" y="1328" width="8" height="24" fill="#111"/>
<rect x="2410" y="1344" width="24" height="8" fill="#111"/><rect x="2426" y="1328" width="8" height="24" fill="#111"/>
<path d="M33,3 H2401 A30,30 0 0 1 2431,33 V1319 A30,30 0 0 1 2401,1349 H33 A30,30 0 0 1 3,1319 V33 A30,30 0 0 1 33,3 Z M33,7 H2401 A26,26 0 0 1 2427,33 V1319 A26,26 0 0 1 2401,1345 H33 A26,26 0 0 1 7,1319 V33 A26,26 0 0 1 33,7 Z" fill-rule="evenodd" fill="url(#spk)"/>
<path d="M33,7 H2401 A26,26 0 0 1 2427,33 V1319 A26,26 0 0 1 2401,1345 H33 A26,26 0 0 1 7,1319 V33 A26,26 0 0 1 33,7 Z M36,16 H2398 A20,20 0 0 1 2418,36 V1316 A20,20 0 0 1 2398,1336 H36 A20,20 0 0 1 16,1316 V36 A20,20 0 0 1 36,16 Z" fill-rule="evenodd" fill="url(#nz)"/>
<path d="M36,16 H2398 A20,20 0 0 1 2418,36 V1316 A20,20 0 0 1 2398,1336 H36 A20,20 0 0 1 16,1316 V36 A20,20 0 0 1 36,16 Z" fill="#6f6f6f"/>
</svg>
<div class="b" style="left:24px;top:24px;width:2386px;height:1304px;background:#eef0f2;border-radius:20px;"></div>
<div class="b" style="left:44px;top:44px;width:2345px;height:146px;background:#fff;"></div>
<div class="b" style="left:44px;top:190px;width:2345px;height:2px;background:#dcdfe3;"></div>
<div class="t nt" style="left:50.69px;top:65.10px;font-size:30px;line-height:30px;color:#1a66a6;transform:scaleX(1.0107);">Synthetic</div>
<svg class="b" style="left:194px;top:71px" width="20" height="21" viewBox="0 0 20 21">
<path d="M3.4 3.5 L10.4 10.3 L3.4 17.1 M9.6 3.5 L16.7 10.3 L9.6 17.1" fill="none" stroke="#5a5a5a" stroke-width="2.1" stroke-linecap="round" stroke-linejoin="miter"/>
</svg>
<div class="t nt" style="left:234.00px;top:65.10px;font-size:30px;line-height:30px;color:#616161;transform:scaleX(0.9971);">Check on www.antlabs.co</div>
<div class="b" style="left:51px;top:115px;width:72px;height:34px;background:#13c15b;border-radius:6px;"></div>
<div class="t" style="left:62.54px;top:120.58px;font-size:21.4px;line-height:21.4px;color:#fff;font-weight:bold;transform:scaleX(0.8636);">PASS</div>
<div class="t" style="left:145.24px;top:115.48px;font-size:26.6px;line-height:26.6px;color:#616161;transform:scaleX(0.9797);">Last ran at Dec 19, 2025 4:56:42 pm</div>
<div class="b" style="left:1084px;top:84px;width:63px;height:54px;background:#fafafa;border:1.5px solid #c9c9c9;border-radius:8px;box-sizing:border-box;"></div>
<div class="b" style="left:1165px;top:84px;width:73px;height:54px;background:#fafafa;border:1.5px solid #c9c9c9;border-radius:8px;box-sizing:border-box;"></div>
<div class="b" style="left:1256px;top:84px;width:138px;height:54px;background:#fafafa;border:1.5px solid #c9c9c9;border-radius:8px;box-sizing:border-box;"></div>
<div class="b" style="left:1412px;top:84px;width:112px;height:54px;background:#eceef1;border-radius:8px;"></div>
<div class="b" style="left:1543px;top:84px;width:137px;height:54px;background:#eceef1;border-radius:8px;"></div>
<div class="b" style="left:1698px;top:84px;width:164px;height:55px;background:#0a5ce6;border-radius:7px;"></div>
<div class="b" style="left:1879px;top:84px;width:521px;height:54px;background:#fff;border:1.5px solid #d2d2d2;border-radius:6px;box-sizing:border-box;"></div>
<div class="b" style="left:2389px;top:44px;width:21px;height:146px;background:#eef0f2;"></div>
<div class="t" style="left:1310.06px;top:100.10px;font-size:22.8px;line-height:22.8px;color:#222;transform:scaleX(0.9694);">Pause</div>
<div class="t" style="left:1464.63px;top:98.20px;font-size:22.8px;line-height:22.8px;color:#1b2738;transform:scaleX(0.9868);">Edit</div>
<div class="t" style="left:1593.27px;top:98.20px;font-size:22.8px;line-height:22.8px;color:#1b2738;transform:scaleX(1.0175);">Delete</div>
<div class="t" style="left:1750.54px;top:99.76px;font-size:23.2px;line-height:23.2px;color:#fff;transform:scaleX(0.9822);">Run now</div>
<div class="t" style="left:1939.08px;top:97.48px;font-size:24px;line-height:24px;color:#222;transform:scaleX(0.9580);">Last 24 hours</div>
<svg class="b" style="left:1104px;top:100px" width="24" height="22" viewBox="0 0 24 22">
<path d="M4.6 9.3 A7.8 7.8 0 0 1 18 6.2" fill="none" stroke="#1e1e1e" stroke-width="2.9"/>
<path d="M21.2 2.8 L21.2 9.6 L14.4 9.6 Z" fill="#1e1e1e"/>
<path d="M19.4 12.7 A7.8 7.8 0 0 1 6 15.8" fill="none" stroke="#1e1e1e" stroke-width="2.9"/>
<path d="M2.8 19.2 L2.8 12.4 L9.6 12.4 Z" fill="#1e1e1e"/>
</svg>
<svg class="b" style="left:1185px;top:100px" width="24" height="24" viewBox="0 0 24 24">
<path d="M8 1.2 H12.5 a1.5 1.5 0 0 1 1.5 1.5 V5 M8 1.2 L2.2 7 V15.5 a1.5 1.5 0 0 0 1.5 1.5 H8.5" fill="none" stroke="#333" stroke-width="1.7"/>
<path d="M8 1.2 V7 H2.2" fill="none" stroke="#333" stroke-width="1.7"/>
<path d="M14 6.2 H19.5 a1.5 1.5 0 0 1 1.5 1.5 V20.7 a1.5 1.5 0 0 1 -1.5 1.5 H10.2 a1.5 1.5 0 0 1 -1.5 -1.5 V12 Z" fill="#fff" stroke="#333" stroke-width="1.7"/>
<path d="M14 6.2 V12 H8.7" fill="none" stroke="#333" stroke-width="1.7"/>
</svg>
<div class="b" style="left:1277px;top:102px;width:8px;height:19px;background:#2a2a2a;border-radius:1px;"></div>
<div class="b" style="left:1288.5px;top:102px;width:8.0px;height:19px;background:#2a2a2a;border-radius:1px;"></div>
<svg class="b" style="left:1430px;top:100px" width="22" height="21" viewBox="0 0 22 21">
<path d="M2.2 18.7 L3.73 13.57 L7.51 17.97 Z" fill="#1b2738"/>
<path d="M4.6 12.6 L15.2 3.5 L19.2 8.1 L8.6 17.2 Z" fill="#1b2738"/>
<path d="M16.2 2.6 L18.0 1.05 a1.6 1.6 0 0 1 2.25 0.17 L21.9 3.1 a1.6 1.6 0 0 1 -0.17 2.25 L20.1 6.9 Z" fill="#1b2738"/>
<path d="M5.2 16.2 L4.4 15.3" stroke="#e9ecf0" stroke-width="1"/>
</svg>
<svg class="b" style="left:1561px;top:99px" width="19" height="22" viewBox="0 0 19 22">
<path d="M6.3 3.6 V2.9 a1.6 1.6 0 0 1 1.6 -1.6 H11.1 a1.6 1.6 0 0 1 1.6 1.6 V3.6" fill="none" stroke="#1b2738" stroke-width="1.6"/>
<rect x="1.3" y="3.6" width="16.4" height="3" rx="0.8" fill="#1b2738"/>
<path d="M2.6 7.4 H16.4 L15.6 18.6 a1.9 1.9 0 0 1 -1.9 1.8 H5.3 a1.9 1.9 0 0 1 -1.9 -1.8 Z" fill="#1b2738"/>
<path d="M6.2 9 V17.5 M9.5 9 V17.5 M12.8 9 V17.5" stroke="#dfe6ee" stroke-width="1.2"/>
</svg>
<svg class="b" style="left:1717px;top:101px" width="21" height="21" viewBox="0 0 21 21">
<circle cx="10.5" cy="10.5" r="9.6" fill="#fff"/>
<path d="M5.8 10.5 L9.2 13.8 L15.3 7.6" fill="none" stroke="#0a5ce6" stroke-width="2.8"/>
</svg>
<svg class="b" style="left:1896px;top:96px" width="31" height="31" viewBox="0 0 31 31">
<circle cx="15.5" cy="15.5" r="12.8" fill="none" stroke="#555" stroke-width="3.6"/>
<path d="M15.5 8.5 V16 H10" fill="none" stroke="#555" stroke-width="2.2"/>
</svg>
<svg class="b" style="left:2362px;top:106px" width="21" height="15" viewBox="0 0 21 15">
<path d="M2 3 L10.5 11.5 L19 3" fill="none" stroke="#222" stroke-width="2.6"/>
</svg>
<div class="b" style="left:52px;top:220px;width:2337px;height:540px;background:#fff;box-shadow:0 2px 3px rgba(0,0,0,.09), 0 0 2px rgba(0,0,0,.05);border-radius:3px;"></div>
<svg class="b" style="left:60px;top:242px" width="32" height="22" viewBox="0 0 32 22">
<path d="M4.6 5 L16.2 15.8 L27.8 5" fill="none" stroke="#2a2a2a" stroke-width="5.6"/>
</svg>
<div class="t nt" style="left:108.96px;top:234.53px;font-size:31.5px;line-height:31.5px;color:#222;transform:scaleX(1.0184);">Properties</div>
<svg class="b" style="left:103.5px;top:305.6px" width="101" height="87" viewBox="0 0 101 87">
<rect x="0" y="0" width="101" height="87" rx="6" fill="#00c75a"/>
<circle cx="34.5" cy="30" r="18" fill="#fff"/>
<circle cx="66.3" cy="30" r="18" fill="#fff"/>
<path d="M21.77 42.73 L34.5 30 L50.4 24 L66.3 30 L79.03 42.73 L50.4 71.4 Z" fill="#fff"/>
<path d="M0 44.6 H36.5 L41.2 33.2 L50.4 50.6 L59.2 37.6 L62.1 44.6 H101" fill="none" stroke="#00c75a" stroke-width="4.4" stroke-linejoin="miter" stroke-miterlimit="6"/>
</svg>
<div class="t" style="left:221.11px;top:335.79px;font-size:26.7px;line-height:26.7px;color:#222;font-weight:bold;transform:scaleX(0.8946);">SSL Test</div>
<div class="b" style="left:104px;top:409px;width:520px;height:2px;background:#eceeef;"></div>
<div class="t" style="left:103.80px;top:432.27px;font-size:23.3px;line-height:23.3px;color:#222;font-weight:bold;transform:scaleX(0.8349);">TAGS</div>
<div class="t" style="left:103.06px;top:472.09px;font-size:24.7px;line-height:24.7px;color:#616161;transform:scaleX(0.9353);">You don't have any tags.</div>
<div class="b" style="left:104px;top:517px;width:520px;height:2px;background:#eceeef;"></div>
<div class="t" style="left:103.08px;top:538.79px;font-size:24.7px;line-height:24.7px;color:#616161;transform:scaleX(0.9200);">Created on Sep 12, 2025 11:36:53 am by Atatus</div>
<div class="t" style="left:104.00px;top:570.09px;font-size:24.7px;line-height:24.7px;color:#616161;transform:scaleX(0.9779);">Administrator</div>
<div class="t" style="left:102.94px;top:601.39px;font-size:24.7px;line-height:24.7px;color:#616161;transform:scaleX(0.9315);">Modified on Sep 12, 2025 11:36:53 am by Atatus</div>
<div class="t" style="left:104.00px;top:631.99px;font-size:24.7px;line-height:24.7px;color:#616161;transform:scaleX(0.9779);">Administrator</div>
<div class="b" style="left:666px;top:306px;width:2px;height:420px;background:#f4f5f6;"></div>
<div class="t nt" style="left:809.05px;top:281.07px;font-size:42.2px;line-height:42.2px;color:#2b2b2b;font-weight:bold;transform:scaleX(0.9504);">96.89%</div>
<div class="t nt" style="left:1131.55px;top:281.07px;font-size:42.2px;line-height:42.2px;color:#2b2b2b;font-weight:bold;transform:scaleX(0.9488);">349.23</div>
<div class="t" style="left:1259.82px;top:296.48px;font-size:24px;line-height:24px;color:#606060;font-weight:bold;transform:scaleX(0.8788);">ms</div>
<div class="t nt" style="left:1465.65px;top:281.07px;font-size:42.2px;line-height:42.2px;color:#2b2b2b;font-weight:bold;transform:scaleX(0.9528);">346.62</div>
<div class="t" style="left:1594.14px;top:296.48px;font-size:24px;line-height:24px;color:#606060;font-weight:bold;transform:scaleX(0.8636);">ms</div>
<div class="t nt" style="left:1799.55px;top:281.07px;font-size:42.2px;line-height:42.2px;color:#2b2b2b;font-weight:bold;transform:scaleX(0.9488);">524.97</div>
<div class="t" style="left:1927.84px;top:296.48px;font-size:24px;line-height:24px;color:#606060;font-weight:bold;transform:scaleX(0.8636);">ms</div>
<div class="t nt" style="left:2133.05px;top:281.07px;font-size:42.2px;line-height:42.2px;color:#2b2b2b;font-weight:bold;transform:scaleX(0.9528);">868.65</div>
<div class="t" style="left:2261.13px;top:296.48px;font-size:24px;line-height:24px;color:#606060;font-weight:bold;transform:scaleX(0.8727);">ms</div>
<div class="t" style="left:836.10px;top:333.18px;font-size:24px;line-height:24px;color:#626262;transform:scaleX(0.8989);">UPTIME</div>
<div class="t" style="left:1131.17px;top:333.18px;font-size:24px;line-height:24px;color:#626262;transform:scaleX(0.9133);">DURATION</div>
<div class="t" style="left:1248.97px;top:339.11px;font-size:17px;line-height:17px;color:#626262;transform:scaleX(1.0256);">(Avg)</div>
<div class="t" style="left:1524.67px;top:333.18px;font-size:24px;line-height:24px;color:#626262;transform:scaleX(0.9125);">P50</div>
<div class="t" style="left:1858.12px;top:333.18px;font-size:24px;line-height:24px;color:#626262;transform:scaleX(0.9425);">P90</div>
<div class="t" style="left:2192.68px;top:333.18px;font-size:24px;line-height:24px;color:#626262;transform:scaleX(0.9125);">P99</div>
<div class="b" style="left:711px;top:377px;width:1669px;height:2px;background:#eceeef;"></div>
<div class="t" style="left:709.91px;top:425.28px;font-size:24px;line-height:24px;color:#222;font-weight:bold;transform:scaleX(0.8898);">OVERVIEW</div>
<div class="t" style="left:922.04px;top:425.28px;font-size:24px;line-height:24px;color:#2b2b2b;transform:scaleX(0.9628);">Connect to <b>www.antlabs.co:443</b> from <b>9 locations</b> every <b>1 minute</b></div>
<div class="t" style="left:923.00px;top:473.18px;font-size:24px;line-height:24px;color:#2b2b2b;transform:scaleX(0.9476);"><b>3 assertions have been configured:</b></div>
<div class="b" style="left:927px;top:512px;width:2px;height:101px;background:#e6e6e6;"></div>
<div class="b" style="left:927px;top:532px;width:52px;height:2px;background:#e6e6e6;"></div>
<div class="b" style="left:927px;top:572px;width:52px;height:2px;background:#e6e6e6;"></div>
<div class="b" style="left:927px;top:611px;width:52px;height:2px;background:#e6e6e6;"></div>
<div class="t" style="left:987.92px;top:522.68px;font-size:24px;line-height:24px;color:#2b2b2b;transform:scaleX(0.9753);"><b>Certificate</b> expires in more than <b>10</b></div>
<div class="t" style="left:987.94px;top:561.98px;font-size:24px;line-height:24px;color:#2b2b2b;transform:scaleX(0.9577);"><b>Maximum TLS Version</b> is more than or equal <b>1.3</b></div>
<div class="t" style="left:987.96px;top:601.68px;font-size:24px;line-height:24px;color:#2b2b2b;transform:scaleX(0.9356);"><b>Response Time</b> is less than <b>1000</b></div>
<div class="t" style="left:922.03px;top:649.68px;font-size:24px;line-height:24px;color:#2b2b2b;transform:scaleX(0.9735);"><b>0 Notification channel</b> have been configured.</div>
<div class="t" style="left:922.02px;top:698.28px;font-size:24px;line-height:24px;color:#2b2b2b;transform:scaleX(0.9781);"><b>0 Retry</b> on failures in <b>1 location</b> will trigger an alert.</div>
<div class="b" style="left:52px;top:797px;width:2337px;height:511px;background:#fff;box-shadow:0 0 2px rgba(0,0,0,.08);border-radius:3px;"></div>
<svg class="b" style="left:69px;top:827px" width="32" height="22" viewBox="0 0 32 22">
<path d="M4.6 5 L16.2 15.8 L27.8 5" fill="none" stroke="#2a2a2a" stroke-width="5.6"/>
</svg>
<div class="t nt" style="left:115.90px;top:820.73px;font-size:31.5px;line-height:31.5px;color:#222;transform:scaleX(1.0479);">History</div>
<div class="b" style="left:104px;top:901px;width:422px;height:57px;background:#fff;border:1.5px solid #cfcfcf;border-radius:4px;box-sizing:border-box;"></div>
<div class="t" style="left:118.84px;top:917.88px;font-size:24px;line-height:24px;color:#6a6a6a;transform:scaleX(0.9814);">Filter by location</div>
<div class="b" style="left:104px;top:966px;width:2274px;height:325px;background:#fff;border:1.5px solid #e4e4e4;border-radius:4px;box-sizing:border-box;"></div>
<div class="t" style="left:130.34px;top:989.48px;font-size:24px;line-height:24px;color:#131b22;font-weight:bold;transform:scaleX(0.9646);">Global Uptime</div>
<div class="t" style="left:1130.83px;top:1040.14px;font-size:27px;line-height:27px;color:#1a66a6;transform:scaleX(0.9733);">Show All Locations</div>
<div class="t" style="left:177.93px;top:1092.68px;font-size:24px;line-height:24px;color:#1a1a1a;font-weight:bold;transform:scaleX(0.9689);">Global Uptime</div>
<div class="t" style="left:2229.05px;top:1093.18px;font-size:24px;line-height:24px;color:#1c1c1c;font-weight:bold;transform:scaleX(0.9450);">96.89%</div>
<div class="b" style="left:350px;top:1089px;width:1867px;height:42px;background:#00c853;"></div>
<div class="b" style="left:406.6px;top:1089px;width:3.1999999999999886px;height:42px;background:#b4564a;"></div>
<div class="b" style="left:413.2px;top:1089px;width:3.1999999999999886px;height:42px;background:#b4564a;"></div>
<div class="b" style="left:438px;top:1089px;width:3.3999999999999773px;height:42px;background:#8f8253;"></div>
<div class="b" style="left:480.5px;top:1089px;width:3.5px;height:42px;background:#8f8253;"></div>
<div class="b" style="left:518px;top:1089px;width:4.5px;height:42px;background:#f0163c;"></div>
<div class="b" style="left:522.5px;top:1089px;width:5.100000000000023px;height:42px;background:#a58055;"></div>
<div class="b" style="left:588px;top:1089px;width:3px;height:42px;background:#8f8253;"></div>
<div class="b" style="left:622px;top:1089px;width:3.5px;height:42px;background:#8f8253;"></div>
<div class="b" style="left:678px;top:1089px;width:2.5px;height:42px;background:#b4564a;"></div>
<div class="b" style="left:700px;top:1089px;width:3px;height:42px;background:#b4564a;"></div>
<div class="b" style="left:831px;top:1089px;width:3.5px;height:42px;background:#d42a3a;"></div>
<div class="b" style="left:834.5px;top:1089px;width:5.5px;height:42px;background:#a87a55;"></div>
<div class="b" style="left:870px;top:1089px;width:7px;height:42px;background:#f0163c;"></div>
<div class="b" style="left:877px;top:1089px;width:5px;height:42px;background:#b07a55;"></div>
<div class="b" style="left:882px;top:1089px;width:4px;height:42px;background:#e0203a;"></div>
<div class="b" style="left:918px;top:1089px;width:4.5px;height:42px;background:#8f8253;"></div>
<div class="b" style="left:951px;top:1089px;width:3px;height:42px;background:#b4564a;"></div>
<div class="b" style="left:956.6px;top:1089px;width:9.399999999999977px;height:42px;background:#f0163c;"></div>
<div class="b" style="left:1200.5px;top:1089px;width:3.0px;height:42px;background:#a84a35;"></div>
<div class="b" style="left:350px;top:1145px;width:1867px;height:3px;background:#7a7a7a;"></div>
<div class="b" style="left:443.7px;top:1147px;width:3.0px;height:6px;background:#7a7a7a;"></div>
<div class="t" style="left:420.18px;top:1159.05px;font-size:15.3px;line-height:15.3px;color:#767676;transform:scaleX(1.0213);-webkit-text-stroke:0.15px currentColor;">Dec 18</div>
<div class="t" style="left:416.85px;top:1181.95px;font-size:15.3px;line-height:15.3px;color:#767676;transform:scaleX(1.0309);-webkit-text-stroke:0.15px currentColor;">6:00 pm</div>
<div class="b" style="left:598.1px;top:1147px;width:3.0px;height:6px;background:#7a7a7a;"></div>
<div class="t" style="left:574.58px;top:1159.05px;font-size:15.3px;line-height:15.3px;color:#767676;transform:scaleX(1.0213);-webkit-text-stroke:0.15px currentColor;">Dec 18</div>
<div class="t" style="left:571.25px;top:1181.95px;font-size:15.3px;line-height:15.3px;color:#767676;transform:scaleX(1.0309);-webkit-text-stroke:0.15px currentColor;">8:00 pm</div>
<div class="b" style="left:752.5px;top:1147px;width:3.0px;height:6px;background:#7a7a7a;"></div>
<div class="t" style="left:728.98px;top:1159.05px;font-size:15.3px;line-height:15.3px;color:#767676;transform:scaleX(1.0213);-webkit-text-stroke:0.15px currentColor;">Dec 18</div>
<div class="t" style="left:722.00px;top:1181.95px;font-size:15.3px;line-height:15.3px;color:#767676;-webkit-text-stroke:0.15px currentColor;">10:00 pm</div>
<div class="b" style="left:906.9000000000001px;top:1147px;width:3.0px;height:6px;background:#7a7a7a;"></div>
<div class="t" style="left:883.38px;top:1159.05px;font-size:15.3px;line-height:15.3px;color:#767676;transform:scaleX(1.0213);-webkit-text-stroke:0.15px currentColor;">Dec 19</div>
<div class="t" style="left:876.40px;top:1181.95px;font-size:15.3px;line-height:15.3px;color:#767676;-webkit-text-stroke:0.15px currentColor;">12:00 am</div>
<div class="b" style="left:1061.3px;top:1147px;width:3.0px;height:6px;background:#7a7a7a;"></div>
<div class="t" style="left:1037.78px;top:1159.05px;font-size:15.3px;line-height:15.3px;color:#767676;transform:scaleX(1.0213);-webkit-text-stroke:0.15px currentColor;">Dec 19</div>
<div class="t" style="left:1034.45px;top:1181.95px;font-size:15.3px;line-height:15.3px;color:#767676;transform:scaleX(1.0309);-webkit-text-stroke:0.15px currentColor;">2:00 am</div>
<div class="b" style="left:1215.7px;top:1147px;width:3.0px;height:6px;background:#7a7a7a;"></div>
<div class="t" style="left:1192.18px;top:1159.05px;font-size:15.3px;line-height:15.3px;color:#767676;transform:scaleX(1.0213);-webkit-text-stroke:0.15px currentColor;">Dec 19</div>
<div class="t" style="left:1188.85px;top:1181.95px;font-size:15.3px;line-height:15.3px;color:#767676;transform:scaleX(1.0309);-webkit-text-stroke:0.15px currentColor;">4:00 am</div>
<div class="b" style="left:1370.1000000000001px;top:1147px;width:3.0px;height:6px;background:#7a7a7a;"></div>
<div class="t" style="left:1346.58px;top:1159.05px;font-size:15.3px;line-height:15.3px;color:#767676;transform:scaleX(1.0213);-webkit-text-stroke:0.15px currentColor;">Dec 19</div>
<div class="t" style="left:1343.25px;top:1181.95px;font-size:15.3px;line-height:15.3px;color:#767676;transform:scaleX(1.0309);-webkit-text-stroke:0.15px currentColor;">6:00 am</div>
<div class="b" style="left:1524.5px;top:1147px;width:3.0px;height:6px;background:#7a7a7a;"></div>
<div class="t" style="left:1500.98px;top:1159.05px;font-size:15.3px;line-height:15.3px;color:#767676;transform:scaleX(1.0213);-webkit-text-stroke:0.15px currentColor;">Dec 19</div>
<div class="t" style="left:1497.65px;top:1181.95px;font-size:15.3px;line-height:15.3px;color:#767676;transform:scaleX(1.0309);-webkit-text-stroke:0.15px currentColor;">8:00 am</div>
<div class="b" style="left:1678.9px;top:1147px;width:3.0px;height:6px;background:#7a7a7a;"></div>
<div class="t" style="left:1655.38px;top:1159.05px;font-size:15.3px;line-height:15.3px;color:#767676;transform:scaleX(1.0213);-webkit-text-stroke:0.15px currentColor;">Dec 19</div>
<div class="t" style="left:1648.40px;top:1181.95px;font-size:15.3px;line-height:15.3px;color:#767676;-webkit-text-stroke:0.15px currentColor;">10:00 am</div>
<div class="b" style="left:1833.3000000000002px;top:1147px;width:3.0px;height:6px;background:#7a7a7a;"></div>
<div class="t" style="left:1809.78px;top:1159.05px;font-size:15.3px;line-height:15.3px;color:#767676;transform:scaleX(1.0213);-webkit-text-stroke:0.15px currentColor;">Dec 19</div>
<div class="t" style="left:1802.80px;top:1181.95px;font-size:15.3px;line-height:15.3px;color:#767676;-webkit-text-stroke:0.15px currentColor;">12:00 pm</div>
<div class="b" style="left:1987.7px;top:1147px;width:3.0px;height:6px;background:#7a7a7a;"></div>
<div class="t" style="left:1964.18px;top:1159.05px;font-size:15.3px;line-height:15.3px;color:#767676;transform:scaleX(1.0213);-webkit-text-stroke:0.15px currentColor;">Dec 19</div>
<div class="t" style="left:1960.85px;top:1181.95px;font-size:15.3px;line-height:15.3px;color:#767676;transform:scaleX(1.0309);-webkit-text-stroke:0.15px currentColor;">2:00 pm</div>
<div class="b" style="left:2142.1px;top:1147px;width:3.0px;height:6px;background:#7a7a7a;"></div>
<div class="t" style="left:2118.58px;top:1159.05px;font-size:15.3px;line-height:15.3px;color:#767676;transform:scaleX(1.0213);-webkit-text-stroke:0.15px currentColor;">Dec 19</div>
<div class="t" style="left:2115.25px;top:1181.95px;font-size:15.3px;line-height:15.3px;color:#767676;transform:scaleX(1.0309);-webkit-text-stroke:0.15px currentColor;">4:00 pm</div>
</body></html>
